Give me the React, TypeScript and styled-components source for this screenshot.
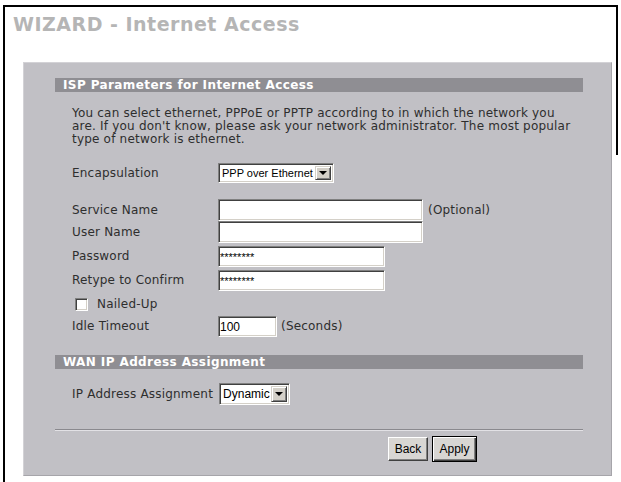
import React from "react";
import styled, { createGlobalStyle } from "styled-components";

const Global = createGlobalStyle`
  html, body { margin: 0; padding: 0; background: #ffffff; }
  body { font-family: "DejaVu Sans", Verdana, sans-serif; }
`;

const Frame = styled.div`
  position: relative;
  box-sizing: border-box;
  width: 615px;
  height: 477px;
  margin: 5px 0 0 3px;
  border-top: 2px solid #000;
  border-left: 2px solid #000;
  &::after {
    content: "";
    position: absolute;
    top: -2px;
    right: 0;
    width: 2px;
    height: 150px;
    background: #000;
  }
`;

const Title = styled.h1`
  margin: 0;
  box-sizing: border-box;
  height: 55px;
  padding: 6px 0 0 8px;
  font: bold 19px/22px "DejaVu Sans", Verdana, sans-serif;
  letter-spacing: 0.5px;
  color: #b5b5b5;
`;

const Panel = styled.div`
  box-sizing: border-box;
  width: 589px;
  height: 414px;
  margin-left: 18px;
  padding: 15px 0 0 31px;
  background: #c1c0c5;
  border: 1px solid #d3d2d6;
  border-right-color: #a6a5aa;
  border-bottom-color: #a6a5aa;
`;

const SectionHeader = styled.div<{ $mt?: number }>`
  box-sizing: border-box;
  width: 528px;
  height: 14px;
  margin-top: ${(p) => p.$mt ?? 0}px;
  padding-left: 8px;
  background: #8f8e93;
  color: #ffffff;
  font: bold 12px/14px "DejaVu Sans", Verdana, sans-serif;
  letter-spacing: 0.4px;
  white-space: nowrap;
`;

const Body = styled.div`
  padding-left: 17px;
  color: #2e2e2e;
  font: 12px/13px "DejaVu Sans", Verdana, sans-serif;
  letter-spacing: 0.2px;
`;

const Intro = styled.p`
  margin: 15px 0 0;
  white-space: nowrap;
`;

const Row = styled.div<{ $h: number; $mt?: number }>`
  display: flex;
  align-items: center;
  height: ${(p) => p.$h}px;
  margin-top: ${(p) => p.$mt ?? 0}px;
  white-space: nowrap;
`;

const Label = styled.span<{ $w?: number }>`
  flex-shrink: 0;
  width: ${(p) => (p.$w ? `${p.$w}px` : "auto")};
  margin-right: ${(p) => (p.$w ? 0 : 6)}px;
`;

const Note = styled.span<{ $ml: number }>`
  margin-left: ${(p) => p.$ml}px;
`;

const TextBox = styled.input<{ $w: number; $fs: number }>`
  box-sizing: border-box;
  width: ${(p) => p.$w}px;
  height: 100%;
  margin: 0;
  padding: 0 1px;
  background: #ffffff;
  border: 1px solid;
  border-color: #808080 #ffffff #ffffff #808080;
  box-shadow: inset 1px 1px 0 #404040, inset -1px -1px 0 #d4d0c8;
  font: ${(p) => p.$fs}px "Liberation Sans", Arial, sans-serif;
  letter-spacing: 0;
  color: #000;
  outline: none;
`;

const SelectBox = styled.div<{ $fs: number }>`
  box-sizing: border-box;
  display: inline-flex;
  align-items: stretch;
  height: 100%;
  background: #ffffff;
  border: 1px solid;
  border-color: #808080 #ffffff #ffffff #808080;
  box-shadow: inset 1px 1px 0 #404040, inset -1px -1px 0 #d4d0c8;
  padding: 2px;
  font: ${(p) => p.$fs}px "Liberation Sans", Arial, sans-serif;
  letter-spacing: 0;
  color: #000;
`;

const SelectText = styled.span<{ $pr: number }>`
  display: flex;
  align-items: center;
  padding: 0 ${(p) => p.$pr}px 0 1px;
`;

const DropButton = styled.span`
  box-sizing: border-box;
  position: relative;
  width: 16px;
  background: #d4d0c8;
  border: 1px solid;
  border-color: #d4d0c8 #404040 #404040 #d4d0c8;
  box-shadow: inset 1px 1px 0 #ffffff, inset -1px -1px 0 #808080;
  &::after {
    content: "";
    position: absolute;
    left: 50%;
    top: 50%;
    margin: -2px 0 0 -4px;
    border-left: 4px solid transparent;
    border-right: 4px solid transparent;
    border-top: 4px solid #000;
  }
`;

const CheckBox = styled.span`
  box-sizing: border-box;
  width: 13px;
  height: 13px;
  margin: 0 9px 0 3px;
  background: #ffffff;
  border: 1px solid;
  border-color: #808080 #ffffff #ffffff #808080;
  box-shadow: inset 1px 1px 0 #404040, inset -1px -1px 0 #d4d0c8;
`;

const Separator = styled.div`
  width: 528px;
  height: 1px;
  margin-top: 24px;
  background: #8a898e;
  border-bottom: 1px solid #e2e1e5;
`;

const ButtonRow = styled.div`
  display: flex;
  align-items: center;
  gap: 4px;
  margin-top: 5px;
  padding-left: 333px;
`;

const Button = styled.button<{ $w: number; $default?: boolean }>`
  box-sizing: border-box;
  width: ${(p) => p.$w}px;
  height: ${(p) => (p.$default ? 26 : 24)}px;
  margin: 0;
  padding: 0;
  background: #d8d6d3;
  border: 1px solid;
  border-color: ${(p) => (p.$default ? "#000" : "#ffffff #404040 #404040 #ffffff")};
  box-shadow: ${(p) =>
    p.$default
      ? "inset 1px 1px 0 #ffffff, inset -1px -1px 0 #404040, inset -2px -2px 0 #808080"
      : "inset -1px -1px 0 #808080"};
  font: 12px "Liberation Sans", Arial, sans-serif;
  color: #000;
`;

export default function App() {
  return (
    <>
      <Global />
      <Frame>
        <Title>WIZARD - Internet Access</Title>
        <Panel>
          <SectionHeader>ISP Parameters for Internet Access</SectionHeader>
          <Body>
            <Intro>
              You can select ethernet, PPPoE or PPTP according to in which the network you
              <br />
              are. If you don't know, please ask your network administrator. The most popular
              <br />
              type of network is ethernet.
            </Intro>
            <Row $h={20} $mt={17}>
              <Label $w={146}>Encapsulation</Label>
              <SelectBox $fs={11}>
                <SelectText $pr={2}>PPP over Ethernet</SelectText>
                <DropButton />
              </SelectBox>
            </Row>
            <Row $h={22} $mt={16}>
              <Label $w={146}>Service Name</Label>
              <TextBox $w={205} $fs={12} readOnly defaultValue="" />
              <Note $ml={5}>(Optional)</Note>
            </Row>
            <Row $h={22}>
              <Label $w={146}>User Name</Label>
              <TextBox $w={205} $fs={12} readOnly defaultValue="" />
            </Row>
            <Row $h={21} $mt={3}>
              <Label $w={146}>Password</Label>
              <TextBox $w={167} $fs={11} readOnly defaultValue="********" />
            </Row>
            <Row $h={21} $mt={3}>
              <Label $w={146}>Retype to Confirm</Label>
              <TextBox $w={167} $fs={11} readOnly defaultValue="********" />
            </Row>
            <Row $h={17} $mt={5}>
              <CheckBox />
              <span>Nailed-Up</span>
            </Row>
            <Row $h={21} $mt={3}>
              <Label $w={146}>Idle Timeout</Label>
              <TextBox $w={59} $fs={12} readOnly defaultValue="100" />
              <Note $ml={4}>(Seconds)</Note>
            </Row>
          </Body>
          <SectionHeader $mt={18}>WAN IP Address Assignment</SectionHeader>
          <Body>
            <Row $h={22} $mt={14}>
              <Label>IP Address Assignment</Label>
              <SelectBox $fs={12}>
                <SelectText $pr={1}>Dynamic</SelectText>
                <DropButton />
              </SelectBox>
            </Row>
          </Body>
          <Separator />
          <ButtonRow>
            <Button $w={40}>Back</Button>
            <Button $w={45} $default>
              Apply
            </Button>
          </ButtonRow>
        </Panel>
      </Frame>
    </>
  );
}
